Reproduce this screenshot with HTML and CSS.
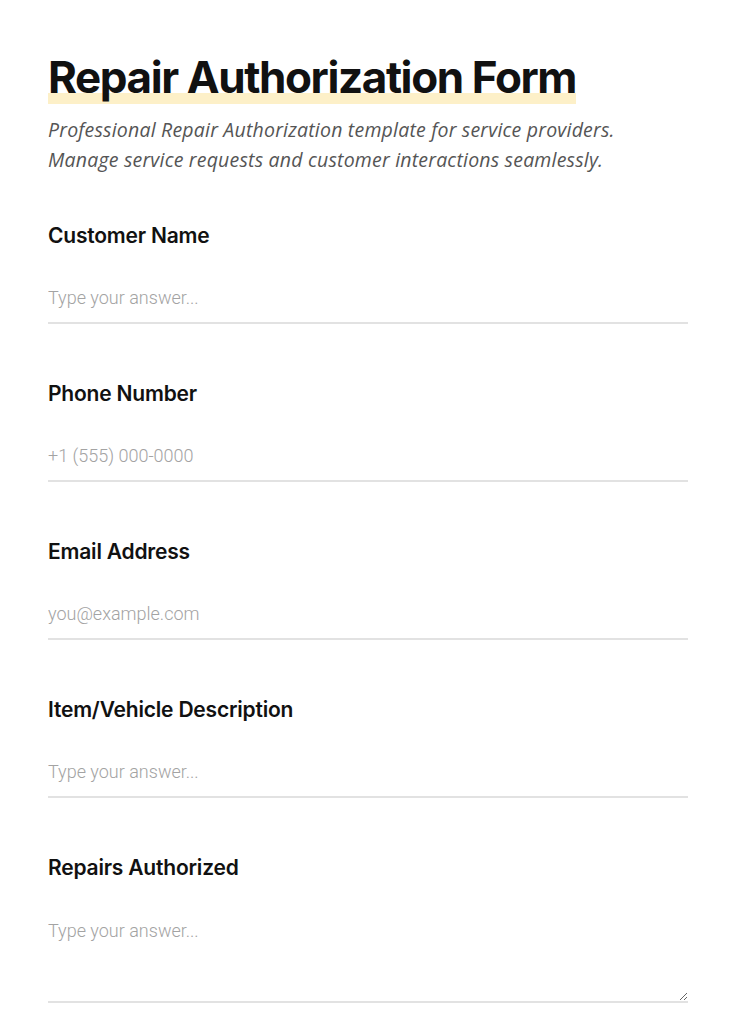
FILE: index.html
```html
<!DOCTYPE html>
<html lang="en">
<head>
<meta charset="utf-8">
<title>Repair Authorization Form</title>
<link rel="stylesheet" href="styles.css">
</head>
<body>
<main class="form">
  <header class="head">
    <h1 class="title"><span class="mark">Repair Authorization Form</span></h1>
    <p class="sub">Professional Repair Authorization template for service providers.<br>Manage service requests and customer interactions seamlessly.</p>
  </header>
  <div class="field">
    <label class="label" for="f1">Customer Name</label>
    <input class="input" id="f1" type="text" placeholder="Type your answer...">
  </div>
  <div class="field">
    <label class="label" for="f2">Phone Number</label>
    <input class="input" id="f2" type="tel" placeholder="+1 (555) 000-0000">
  </div>
  <div class="field">
    <label class="label" for="f3">Email Address</label>
    <input class="input" id="f3" type="email" placeholder="you@example.com">
  </div>
  <div class="field">
    <label class="label" for="f4">Item/Vehicle Description</label>
    <input class="input" id="f4" type="text" placeholder="Type your answer...">
  </div>
  <div class="field">
    <label class="label" for="f5">Repairs Authorized</label>
    <textarea class="input area" id="f5" placeholder="Type your answer..."></textarea>
  </div>
</main>
</body>
</html>
```
FILE: styles.css
```css
* { box-sizing: border-box; }
html, body { margin: 0; background: #fff; }
body {
  font-family: Inter, "Noto Sans", sans-serif;
  color: #111;
}
.form {
  width: 640px;
  margin: 0 48px;
  padding-top: 51px;
}
.head { margin-bottom: 47px; }
.title {
  margin: 0;
  font-size: 44px;
  font-weight: 700;
  line-height: 53px;
  letter-spacing: -1.4px;
}
.mark {
  display: inline-block;
  background: linear-gradient(to top, #fdf0c8 11px, transparent 11px);
}
.sub {
  margin: 11px 0 0;
  font-family: "Open Sans", sans-serif;
  font-style: italic;
  font-weight: 400;
  font-size: 19.5px;
  line-height: 30px;
  letter-spacing: 0.2px;
  color: #555;
}
.field {
  display: flex;
  flex-direction: column;
  margin-bottom: 56px;
}
.label {
  font-size: 21px;
  font-weight: 600;
  line-height: 28px;
  letter-spacing: -0.2px;
  color: #111;
}
.input {
  margin-top: 16px;
  padding: 20px 0 12px;
  border: 0;
  border-bottom: 2px solid #e2e2e2;
  outline: none;
  font-family: Roboto, sans-serif;
  font-size: 18px;
  line-height: 24px;
  color: #111;
  background: transparent;
}
.input::placeholder { color: #a3a3a3; font-weight: 300; }
.area {
  padding-top: 21px;
  height: 105px;
  resize: vertical;
}
```
